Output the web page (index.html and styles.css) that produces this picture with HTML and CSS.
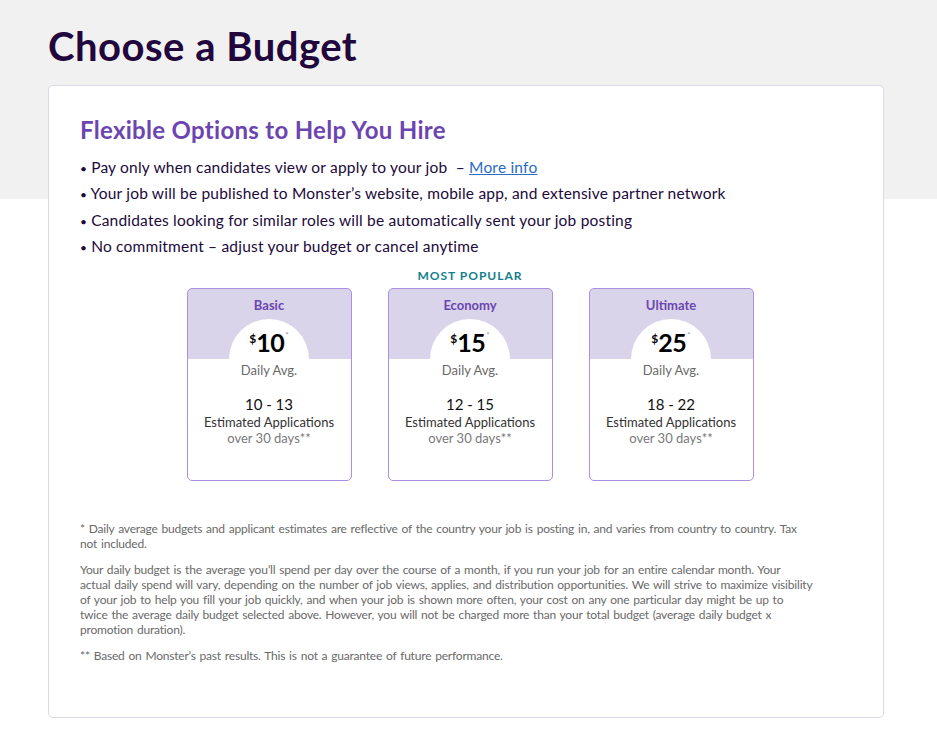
FILE: index.html
```html
<!DOCTYPE html>
<html lang="en">
<head>
<meta charset="utf-8">
<title>Choose a Budget</title>
<link rel="stylesheet" href="styles.css">
</head>
<body>
<div class="page">
  <h1 class="page-title">Choose a Budget</h1>
  <section class="panel">
    <h2 class="panel-title">Flexible Options to Help You Hire</h2>
    <ul class="perks">
      <li><span class="dot">•</span> Pay only when candidates view or apply to your job &nbsp;– <a href="#" class="more">More info</a></li>
      <li><span class="dot">•</span> Your job will be published to Monster’s website, mobile app, and extensive partner network</li>
      <li><span class="dot">•</span> Candidates looking for similar roles will be automatically sent your job posting</li>
      <li><span class="dot">•</span> No commitment – adjust your budget or cancel anytime</li>
    </ul>
    <div class="popular">MOST POPULAR</div>
    <div class="plans">
      <div class="plan">
        <div class="plan-name">Basic</div>
        <div class="disc"><span class="cur">$</span><span class="amt">10</span><span class="ast">*</span></div>
        <div class="daily">Daily Avg.</div>
        <div class="range">10 - 13</div>
        <div class="est">Estimated Applications</div>
        <div class="over">over 30 days**</div>
      </div>
      <div class="plan">
        <div class="plan-name">Economy</div>
        <div class="disc"><span class="cur">$</span><span class="amt">15</span><span class="ast">*</span></div>
        <div class="daily">Daily Avg.</div>
        <div class="range">12 - 15</div>
        <div class="est">Estimated Applications</div>
        <div class="over">over 30 days**</div>
      </div>
      <div class="plan">
        <div class="plan-name">Ultimate</div>
        <div class="disc"><span class="cur">$</span><span class="amt">25</span><span class="ast">*</span></div>
        <div class="daily">Daily Avg.</div>
        <div class="range">18 - 22</div>
        <div class="est">Estimated Applications</div>
        <div class="over">over 30 days**</div>
      </div>
    </div>
    <div class="notes">
      <p>* Daily average budgets and applicant estimates are reflective of the country your job is posting in, and varies from country to country. Tax not included.</p>
      <p>Your daily budget is the average you’ll spend per day over the course of a month, if you run your job for an entire calendar month. Your actual daily spend will vary, depending on the number of job views, applies, and distribution opportunities. We will strive to maximize visibility of your job to help you fill your job quickly, and when your job is shown more often, your cost on any one particular day might be up to twice the average daily budget selected above. However, you will not be charged more than your total budget (average daily budget x promotion duration).</p>
      <p>** Based on Monster’s past results. This is not a guarantee of future performance.</p>
    </div>
  </section>
</div>
</body>
</html>
```
FILE: styles.css
```css
* { box-sizing: border-box; }
html, body { margin: 0; padding: 0; }
html {
  background-color: #ffffff;
  background-image: linear-gradient(#f1f1f1, #f1f1f1);
  background-repeat: no-repeat;
  background-size: 100% 199px;
}
body {
  font-family: Lato, "Liberation Sans", sans-serif;
  color: #21093b;
}
.page {
  padding: 22px 53px 14px 48px;
}
.page-title {
  margin: 0 0 15px;
  font-size: 40px;
  line-height: 48px;
  font-weight: 700;
  letter-spacing: 0.5px;
  color: #22073d;
}
.panel {
  background: #fff;
  border: 1px solid #dcd9e6;
  border-radius: 5px;
  padding: 30px 31px 54px 31px;
}
.panel-title {
  margin: 0 0 10px;
  font-size: 24px;
  line-height: 28px;
  font-weight: 700;
  letter-spacing: 0.3px;
  color: #6c45b0;
}
.perks {
  list-style: none;
  margin: 0;
  padding: 0;
  font-size: 15.5px;
  line-height: 26.4px;
  letter-spacing: 0.2px;
  color: #21093b;
}
.perks li {
  height: 26.4px;
}
.dot {
  font-size: 12px;
  line-height: 0;
  letter-spacing: 0;
}
.more {
  color: #2a6cc4;
  text-decoration: underline;
}
.popular {
  margin-top: 9px;
  text-align: center;
  padding-left: 8px;
  font-size: 12px;
  line-height: 14px;
  font-weight: 700;
  letter-spacing: 1px;
  color: #137e8d;
}
.plans {
  margin-top: 5px;
  display: flex;
  justify-content: center;
  gap: 36px;
  padding-left: 8px;
}
.plan {
  width: 165px;
  height: 193px;
  border: 1px solid #ab8fe0;
  border-radius: 5px;
  background: linear-gradient(#d9d4e9 70px, #ffffff 70px);
  text-align: center;
  display: flex;
  flex-direction: column;
  align-items: center;
}
.plan-name {
  margin-top: 8px;
  font-size: 13px;
  line-height: 16px;
  font-weight: 700;
  color: #6c45b0;
}
.disc {
  margin-top: 6px;
  width: 80px;
  height: 40px;
  border-radius: 40px 40px 0 0;
  background: #fff;
  display: flex;
  justify-content: center;
  align-items: flex-start;
  padding-top: 11px;
  color: #000;
  font-weight: 700;
}
.cur {
  font-size: 12px;
  line-height: 14px;
  margin-top: 2px;
}
.amt {
  font-size: 25px;
  line-height: 25px;
  letter-spacing: -0.5px;
}
.ast {
  font-size: 8px;
  line-height: 8px;
  color: #999;
  margin-left: 1px;
  margin-top: 1px;
  font-weight: 400;
}
.daily {
  margin-top: 3px;
  font-size: 13px;
  line-height: 16px;
  color: #6a6a6a;
}
.range {
  margin-top: 17px;
  font-size: 15px;
  line-height: 18px;
  color: #111;
}
.est {
  margin-top: 1px;
  font-size: 13px;
  line-height: 16px;
  color: #333;
}
.over {
  font-size: 13px;
  line-height: 16px;
  color: #7a7a7a;
}
.notes {
  margin-top: 40px;
  max-width: 734px;
  font-size: 12px;
  line-height: 15px;
  letter-spacing: -0.2px;
  word-spacing: 1px;
  color: #6a6a6a;
}
.notes p {
  margin: 0 0 11px;
}
.notes p:last-child { margin-bottom: 0; }
```
